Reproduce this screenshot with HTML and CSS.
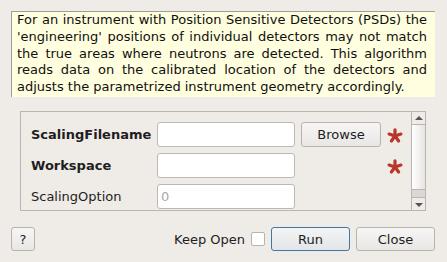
FILE: index.html
```html
<!DOCTYPE html>
<html lang="en">
<head>
  <meta charset="UTF-8" />
  <title>ScalingFilename dialog</title>
  <link rel="stylesheet" href="styles.css">
</head>
<body>
  <div class="dialog">
    <!-- description -->
    <p class="desc">For an instrument with Position Sensitive Detectors (PSDs) the 'engineering' positions of individual detectors may not match the true areas where neutrons are detected. This algorithm reads data on the calibrated location of the detectors and adjusts the parametrized instrument geometry accordingly.</p>

    <!-- properties -->
    <section class="props">
      <div class="rows">
        <label class="lbl req">ScalingFilename</label>
        <input class="inp" type="text">
        <button class="btn browse">Browse</button>
        <span class="star"><svg viewBox="0 0 16 16" width="16" height="16"><g stroke="#b8362a" stroke-width="3.2" stroke-linecap="round"><line x1="8" y1="8" x2="8" y2="1.8"/><line x1="8" y1="8" x2="13.9" y2="6.1"/><line x1="8" y1="8" x2="11.6" y2="13"/><line x1="8" y1="8" x2="4.4" y2="13"/><line x1="8" y1="8" x2="2.1" y2="6.1"/></g></svg></span>

        <label class="lbl req">Workspace</label>
        <input class="inp" type="text">
        <span></span>
        <span class="star"><svg viewBox="0 0 16 16" width="16" height="16"><g stroke="#b8362a" stroke-width="3.2" stroke-linecap="round"><line x1="8" y1="8" x2="8" y2="1.8"/><line x1="8" y1="8" x2="13.9" y2="6.1"/><line x1="8" y1="8" x2="11.6" y2="13"/><line x1="8" y1="8" x2="4.4" y2="13"/><line x1="8" y1="8" x2="2.1" y2="6.1"/></g></svg></span>

        <label class="lbl">ScalingOption</label>
        <input class="inp" type="text" placeholder="0">
        <span></span>
        <span></span>
      </div>
      <div class="scroll">
        <div class="arrow up"></div>
        <div class="track"><div class="thumb"></div></div>
        <div class="arrow down"></div>
      </div>
    </section>

    <!-- footer -->
    <footer class="foot">
      <button class="btn help">?</button>
      <span class="spacer"></span>
      <label class="keep">Keep Open <span class="check"></span></label>
      <button class="btn run">Run</button>
      <button class="btn close">Close</button>
    </footer>
  </div>
</body>
</html>
```

FILE: styles.css
```css
:root{
  --bg:#efebe7;
  --line:#b9b5b0;
  --txt:#1e1e1e;
  font-family:"DejaVu Sans",Verdana,sans-serif;
}

*,*::before,*::after{box-sizing:border-box;margin:0;padding:0}
html,body{width:100%;height:100%;overflow:hidden;background:var(--bg);color:var(--txt)}

.dialog{padding:11px 12px 0 11px;display:flex;flex-direction:column}

/* ---------- DESCRIPTION ---------- */
.desc{height:86px;overflow:hidden;background:#ffffdf;border-top:1px solid #9f9d9a;border-left:1px solid #9f9d9a;
      padding:0 8px 0 5px;font-size:13px;line-height:16.8px;text-align:justify;color:#101010}

/* ---------- PROPERTIES ---------- */
.props{margin:14px 9px 0;height:100px;border:1px solid var(--line);display:flex}
.rows{flex:1;display:grid;grid-template-columns:120px 138px 80px 16px;column-gap:6px;row-gap:6px;
      grid-auto-rows:25px;align-items:center;padding:10px 0 0 10px}
.lbl{font-size:13px;white-space:nowrap}
.lbl.req{font-weight:700}
.inp{height:25px;width:138px;border:1px solid #bdb9b4;border-radius:3px;background:#fff;
     font:13px "DejaVu Sans",sans-serif;padding:0 3px;outline:none}
.inp::placeholder{color:#a8a8a8}
.star{display:flex;align-items:center;height:25px;margin-top:2px}

.scroll{width:14px;border-left:1px solid var(--line);display:flex;flex-direction:column;background:#efebe7}
.arrow{height:13px;position:relative;border-bottom:1px solid var(--line)}
.arrow.down{border-bottom:none;border-top:1px solid var(--line)}
.arrow::after{content:"";position:absolute;left:3px;top:4px;border:4px solid transparent;border-top:0;border-bottom:4px solid #555}
.arrow.down::after{top:5px;border-bottom:0;border-top:4px solid #555}
.track{flex:1;display:flex;flex-direction:column;background:#dcd8d4}
.thumb{height:65px;background:linear-gradient(90deg,#fff,#f2f0ee 60%,#e6e3e0);border-bottom:1px solid var(--line)}

/* ---------- FOOTER ---------- */
.foot{margin-top:16px;display:flex;align-items:center;gap:6px;height:24px}
.spacer{flex:1}
.btn{height:24px;border:1px solid #b7b3ae;border-radius:3px;background:linear-gradient(#f7f6f5,#e9e7e4);
     font:13px "DejaVu Sans",sans-serif;color:var(--txt)}
.help{width:24px}
.browse{width:80px;height:25px}
.keep{font-size:13px;display:flex;align-items:center;gap:6px;margin-right:0}
.check{width:14px;height:14px;border:1px solid #b7b3ae;border-radius:2px;background:#fff}
.run{width:79px;border-color:#3d78a8;background:linear-gradient(#f3f4f5,#e3e5e8)}
.close{width:79px}
```
